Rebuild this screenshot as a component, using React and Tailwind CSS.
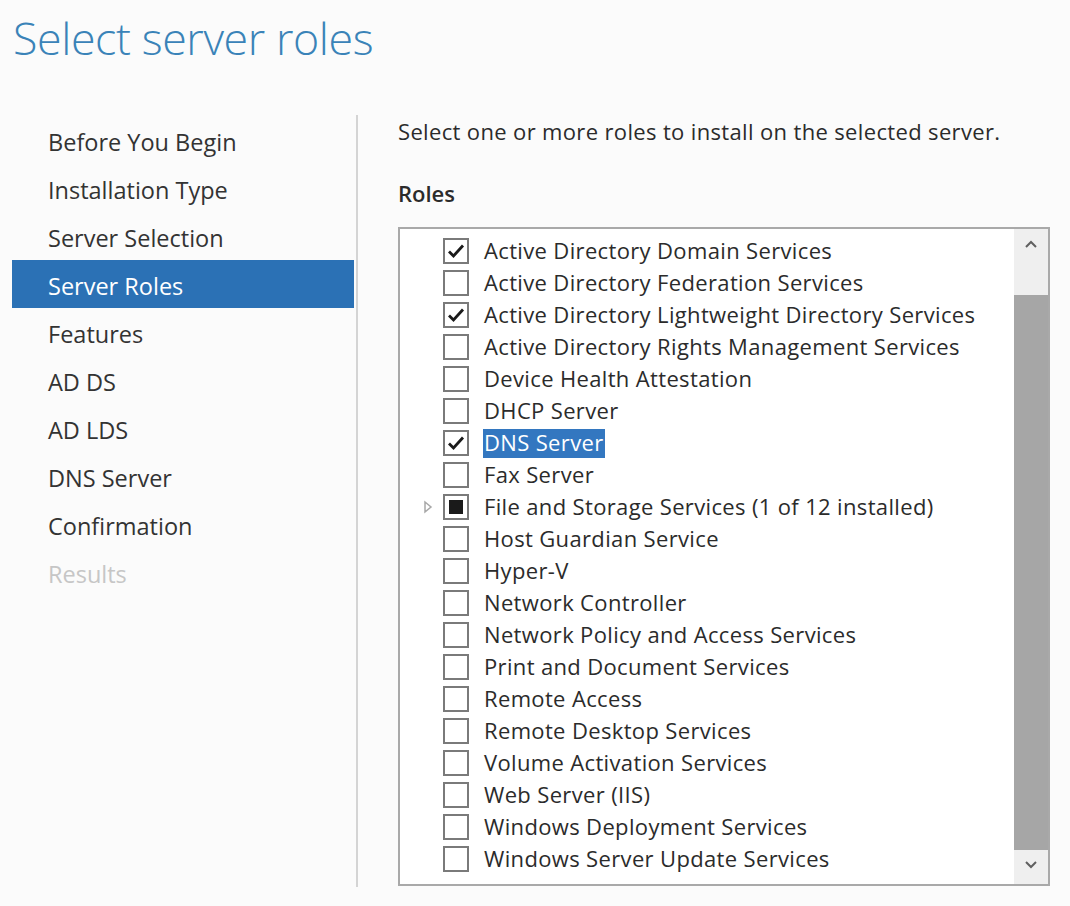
import { useState } from 'react';

const steps = [
  'Before You Begin',
  'Installation Type',
  'Server Selection',
  'Server Roles',
  'Features',
  'AD DS',
  'AD LDS',
  'DNS Server',
  'Confirmation',
  'Results',
];

const roles = [
  { name: 'Active Directory Domain Services', state: 'checked' },
  { name: 'Active Directory Federation Services' },
  { name: 'Active Directory Lightweight Directory Services', state: 'checked' },
  { name: 'Active Directory Rights Management Services' },
  { name: 'Device Health Attestation' },
  { name: 'DHCP Server' },
  { name: 'DNS Server', state: 'checked', selected: true },
  { name: 'Fax Server' },
  { name: 'File and Storage Services (1 of 12 installed)', state: 'partial', expandable: true },
  { name: 'Host Guardian Service' },
  { name: 'Hyper-V' },
  { name: 'Network Controller' },
  { name: 'Network Policy and Access Services' },
  { name: 'Print and Document Services' },
  { name: 'Remote Access' },
  { name: 'Remote Desktop Services' },
  { name: 'Volume Activation Services' },
  { name: 'Web Server (IIS)' },
  { name: 'Windows Deployment Services' },
  { name: 'Windows Server Update Services' },
];

function CheckBox({ state }) {
  return (
    <span className="w-[26px] h-[26px] border-2 border-[#7a7a7a] bg-white flex items-center justify-center shrink-0">
      {state === 'checked' && (
        <svg width="18" height="16" viewBox="0 0 18 16">
          <path d="M2 8.5 L6.5 13 L16 2.5" fill="none" stroke="#1a1a1a" strokeWidth="2.8" />
        </svg>
      )}
      {state === 'partial' && <span className="w-[14px] h-[14px] bg-[#1a1a1a]" />}
    </span>
  );
}

function App() {
  const [current] = useState('Server Roles');

  return (
    <div className="w-[1070px] h-[906px] bg-[#fbfbfb] overflow-hidden font-['Open_Sans',sans-serif] text-[#2b2b2b]">
      {/* Titre */}
      <h1 className="pl-[13px] pt-[8px] h-[115px] text-[44.75px] font-light leading-[60px] text-[#3a83b8] tracking-[-0.4px]">
        Select server roles
      </h1>

      <div className="flex">
        {/* Navigation de l'assistant */}
        <nav className="w-[358px] pl-[12px] pr-[2px] pt-[1px] h-[772px] border-r-2 border-[#d4d4d4]">
          {steps.map((s) => (
            <div
              key={s}
              className={`h-[48px] flex items-center pl-[36px] pt-[6px] text-[23.5px] ${
                s === current
                  ? 'bg-[#2b71b5] text-white'
                  : s === 'Results'
                  ? 'text-[#c6c6c6]'
                  : 'text-[#333333]'
              }`}
            >
              {s}
            </div>
          ))}
        </nav>

        {/* Contenu principal */}
        <div className="flex-1 pl-[40px] pr-[20px]">
          <p className="h-[32px] flex items-center text-[22px] tracking-[0.35px] text-[#2b2b2b]">
            Select one or more roles to install on the selected server.
          </p>
          <p className="mt-[30px] h-[32px] flex items-center text-[22px] font-semibold text-[#2b2b2b]">
            Roles
          </p>

          <div className="mt-[18px] h-[659px] border-2 border-[#a9a9a9] bg-white flex">
            <div className="flex-1 pt-[9px] overflow-hidden">
              <div className="-mt-[3px]">
                {roles.map((r) => (
                  <div key={r.name} className="h-[32px] flex items-center">
                    <span className="w-[43px] flex justify-end pr-[10px]">
                      {r.expandable && (
                        <svg width="10" height="14" viewBox="0 0 10 14">
                          <path d="M2 2 L8 7 L2 12 Z" fill="none" stroke="#a8a8a8" strokeWidth="1.5" />
                        </svg>
                      )}
                    </span>
                    <CheckBox state={r.state} />
                    <span
                      className={`ml-[14px] px-[1px] pb-[2px] h-[29px] flex items-center text-[22px] tracking-[0.35px] whitespace-nowrap ${
                        r.selected ? 'bg-[#3377c0] text-white' : 'text-[#2b2b2b]'
                      }`}
                    >
                      {r.name}
                    </span>
                  </div>
                ))}
              </div>
            </div>

            {/* Barre de défilement */}
            <div className="w-[34px] bg-[#efefef] flex flex-col">
              <div className="h-[66px] flex justify-center pt-[10px]">
                <svg width="14" height="10" viewBox="0 0 14 10">
                  <path d="M2 8 L7 3 L12 8" fill="none" stroke="#606060" strokeWidth="2" />
                </svg>
              </div>
              <div className="flex-1 bg-[#a6a6a6]" />
              <div className="h-[34px] flex justify-center pt-[10px]">
                <svg width="14" height="10" viewBox="0 0 14 10">
                  <path d="M2 2 L7 7 L12 2" fill="none" stroke="#606060" strokeWidth="2" />
                </svg>
              </div>
            </div>
          </div>
        </div>
      </div>
    </div>
  );
}

export default App;
